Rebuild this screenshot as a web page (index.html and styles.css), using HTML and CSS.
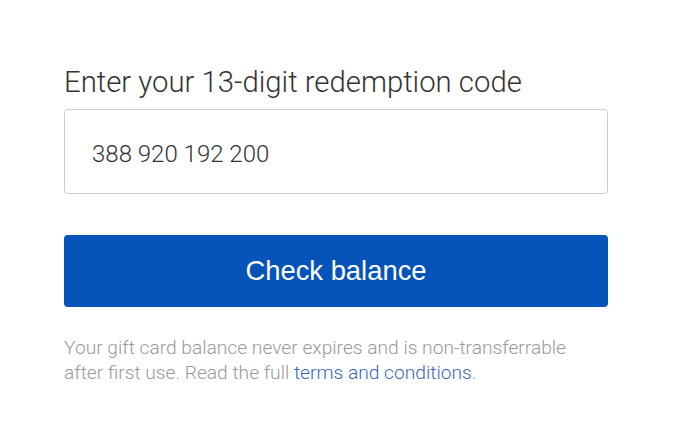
FILE: index.html
```html
<!DOCTYPE html>
<html lang="en">
<head>
<meta charset="utf-8">
<title>Check gift card balance</title>
<link rel="stylesheet" href="styles.css">
</head>
<body>
<main class="redeem">
  <label class="redeem__label" for="code">Enter your 13-digit redemption code</label>
  <div class="redeem__field">
    <input id="code" class="redeem__input" type="text" value="388 920 192 200">
  </div>
  <button class="redeem__button" type="button">Check balance</button>
  <p class="redeem__note">Your gift card balance never expires and is non-transferrable after first use. Read the full <a class="redeem__link" href="#">terms and conditions</a>.</p>
</main>
</body>
</html>
```

FILE: styles.css
```css
html, body {
  margin: 0;
  padding: 0;
  background: #ffffff;
}

.redeem {
  width: 544px;
  padding: 65px 0 0 64px;
  display: flex;
  flex-direction: column;
  font-family: "Roboto", "Liberation Sans", sans-serif;
}

.redeem__label {
  font-size: 29.3px;
  font-weight: 300;
  color: #333333;
  line-height: 34px;
}

.redeem__field {
  margin-top: 10px;
}

.redeem__input {
  box-sizing: border-box;
  display: block;
  width: 544px;
  height: 85px;
  margin: 0;
  padding: 4px 27px 0;
  border: 1px solid #cccccc;
  border-radius: 4px;
  font-family: "Roboto", "Liberation Sans", sans-serif;
  font-size: 24px;
  font-weight: 300;
  color: #333333;
  outline: none;
}

.redeem__button {
  margin-top: 41px;
  height: 72px;
  width: 544px;
  padding: 0;
  border: 0;
  border-radius: 4px;
  background: #0654ba;
  color: #ffffff;
  font-family: "Liberation Sans", sans-serif;
  font-size: 27.4px;
  font-weight: 400;
  cursor: pointer;
}

.redeem__note {
  margin: 28px 0 0;
  font-size: 19.2px;
  line-height: 25px;
  font-weight: 300;
  color: #999999;
}

.redeem__link {
  color: #3665c0;
  text-decoration: none;
}
```
